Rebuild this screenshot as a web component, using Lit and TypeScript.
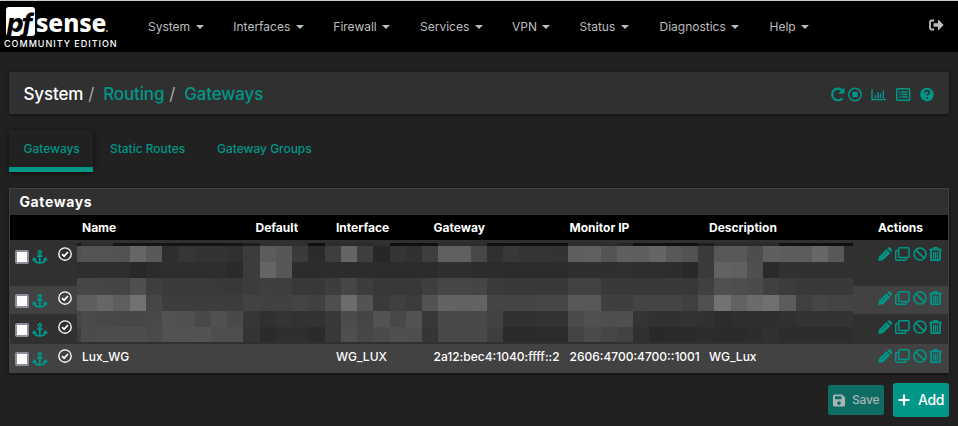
import { LitElement, html, css, svg } from "lit";
import { customElement } from "lit/decorators.js";

const MENU = ["System", "Interfaces", "Firewall", "Services", "VPN", "Status", "Diagnostics", "Help"];

// Grey levels (hex pairs) of the redaction blocks, grouped one + tens per band.
const MOSAIC: { y: number; h: number; v: string }[] = [
  { y: 3, h: 3, v: "18 2d2d1414141414141414 1b303030102b2b2b2f0f 100f2c2c2c1010101010 2d2d2d25101010101c2a 2a2a2a1010101010" },
  { y: 6, h: 16, v: "50 54545266592e36333330 3c5c573b2b3e653e2734 313e6060483038343433 5f60545f5f6558523b58 584d5f5d5c675830" },
  { y: 22, h: 16, v: "2e 2e2f2e282c2e2e2e2e2a 3c65572c2c2c2c2c2c2c 2c2c2f2f2c2c2c2c2c2c 2f2f2f302e2e2d293a62 604f2a3131313130" },
  { y: 38, h: 17, v: "46 4645444f3f3a3a3a3938 3c3f3e38383d463d3838 383f4646453b38383838 42423939393939384050 4e4b403c39393939" },
  { y: 55, h: 16, v: "5c 5f665e72463d3d3d3d3d 42414144404e6c533a40 3c536362634544444647 58583f3f444544405072 626b705c40464443" },
  { y: 71, h: 16, v: "46 4a484747495250495049 3630343232384b455248 5238484848423031 3232 4a504e4f34313133312c 2e2e2e3033333333" },
  { y: 87, h: 15, v: "3e 4b4d4d4d4a5252534e4e 342b2f2f2b384f474b4f 4e354848493e2a2a2c2c 444b464230292b2b2d2b 2b2d312d2d2d2d2d" },
];

const mosaic = () => svg`${MOSAIC.map((band) => {
  const cells = band.v.replace(/ /g, "").match(/../g) ?? [];
  return cells.map((g, i) => {
    const x = i === 0 ? 0 : Math.round(4 + (i - 1) * 16.24);
    const end = Math.min(776, Math.round(4 + i * 16.24));
    return svg`<rect x=${x} y=${band.y} width=${Math.max(0, end - x)} height=${band.h} fill=${"#" + g + g + g}></rect>`;
  });
})}`;

const anchor = html`<svg class="anchor" width="16" height="14" viewBox="0 0 16 14" fill="none" stroke="currentColor">
  <circle cx="7.800" cy="2.300" r="1.600" stroke-width="1.500"/><path d="M7.800 4V13M5 6.200h5.600" stroke-width="1.700"/>
  <path d="M1.900 8.700C2.300 11.600 4.700 12.900 7.800 12.900s5.500-1.300 5.900-4.200" stroke-width="1.900"/>
  <path d="M.5 10.600 1.900 8l2.500 2M15.200 10.600 13.700 8l-2.500 2" stroke-width="1.200"/></svg>`;
const check = html`<svg class="check" width="14" height="14" viewBox="0 0 14 14" fill="none" stroke="currentColor">
  <circle cx="7" cy="7" r="6.200" stroke-width="1.350"/><path d="m4 7.200 2.100 2L10 5" stroke-width="1.700"/></svg>`;
const pencil = html`<svg width="14.500" height="14" viewBox="0 0 14.500 14" fill="currentColor">
  <path d="M.2 14 1.100 9.400 8.400 2.200l3.900 3.900L5 13.200zM9.300 1.400l.9-.8q1-.9 1.900 0l1.700 1.700q.9.900 0 1.900l-.9.900z"/>
  <path d="M3.600 10.300 9.100 4.900" stroke="#303030" stroke-width=".6"/></svg>`;
const clone = html`<svg width="15" height="14" viewBox="0 0 15 14" fill="none" stroke="currentColor" stroke-width="1.500">
  <rect x="3.700" y=".75" width="10.300" height="9.800" rx="1"/><path d="M3.700 3.500H1.750q-1 0-1 1v7.750q0 1 1 1h8.300q1 0 1-1v-1.800"/></svg>`;
const ban = html`<svg width="14" height="14" viewBox="0 0 14 14" fill="none" stroke="currentColor" stroke-width="1.700">
  <circle cx="7" cy="7" r="6"/><path d="m2.800 2.800 8.400 8.400"/></svg>`;
const trash = html`<svg width="13" height="14" viewBox="0 0 13 14" fill="none" stroke="currentColor">
  <path d="M.3 2.500h12.400" stroke-width="1.700"/><path d="M4.200 2.200 5 .8h3l.8 1.400" stroke-width="1.400"/>
  <path d="M2 3v9.200q0 1 1 1h7q1 0 1-1V3" stroke-width="1.800"/><path d="M4.600 4.800v7M6.500 4.800v7M8.400 4.800v7" stroke-width="1.200"/></svg>`;

@customElement("app-root")
export class AppRoot extends LitElement {
  static styles = css`
    :host { display: block; width: 958px; height: 426px; overflow: hidden; background: #212121; color: #fff;
      font: 500 12px/16px Inter, "Liberation Sans", sans-serif; }
    * { box-sizing: border-box; }
    svg { display: block; flex: none; }
    .nav { height: 52px; border-top: 1px solid #c9cbca; background: #000; display: flex; }
    .brand { width: 148px; padding: 6px 0 0 4px; }
    .logo { display: flex; height: 29px; padding-left: 2px; }
    .mark { width: 29px; height: 29px; background: #fff; border-radius: 3px; color: #000;
      font: italic 800 26px/32px Inter, sans-serif; letter-spacing: -1.800px; padding-left: 1px; }
    .sense { width: 71px; font: 800 24.500px/32px "Noto Sans", sans-serif; letter-spacing: -.1px; padding-left: 1px; }
    .reg { width: 2px; height: 2px; background: #777; margin-top: 23px; }
    .edition { font-size: 9px; line-height: 12px; letter-spacing: .98px; font-weight: 500; margin-top: 2px; white-space: nowrap; }
    .menu { display: grid; grid-template-columns: 85.300px 100px 86.700px 92px 67.500px 80px 110px 60px; align-items: center; }
    .item { display: flex; align-items: center; gap: 5.500px; color: #bdbdbd; font-size: 12px; font-weight: 400; letter-spacing: 0; }
    .caret { border: 4px solid transparent; border-top-color: #bdbdbd; border-bottom: 0; }
    .exit { margin: 18px 14px 0 auto; color: #bdbdbd; }
    .crumbs { margin: 20px 9px 0; height: 42px; background: #303030; display: flex; align-items: center; padding: 1px 14px 0 14.500px;
      font: 500 17px/24px Inter, sans-serif; letter-spacing: -.15px; color: #009688; box-shadow: 0 1px 4px #0008; }
    .here { color: #fff; }
    .slash { color: #aaa; font-weight: 400; margin: 0 9px 0 5px; }
    .tools { margin: 2px .5px 0 auto; }
    .tabs { display: flex; margin: 16px 9px 0; color: #009688; line-height: 37px; height: 42px; }
    .tab { padding: 0 14px; margin-right: 4px; letter-spacing: -.03px; }
    .on { border-bottom: 5px solid #009688; width: 84px; margin-right: 3px; padding-left: 14.500px; box-shadow: 0 1px 6px #0009; }
    .panel { margin: 16px 9px 0; height: 185px; border: 1px solid #424242; background: #303030; position: relative; box-shadow: 0 1px 4px #0008; }
    .title { height: 26px; padding-left: 9.500px; font: 700 14px/26px Inter, sans-serif; letter-spacing: .6px; }
    .row { display: grid; grid-template-columns: 22px 26px 24px 173.500px 80.500px 97.500px 136px 139.500px 169px 1fr; white-space: nowrap; }
    .head { height: 25px; line-height: 25px; background: #000; font-weight: 700; }
    .r0 { height: 46px; --top: 7px; } .r1 { height: 28px; --top: 5px; } .r2 { height: 30px; --top: 6px; } .r3 { height: 28px; --top: 5px; }
    .r1, .r3 { background: #424242; }
    .cell { padding-top: 5px; }
    .box { width: 14px; height: 14px; margin: calc(var(--top) + 3px) 0 0 5px; background: #fff; border: 2px solid #8e8b9d; border-radius: 2px; }
    .anchor { color: #009688; margin-top: calc(var(--top) + 3px); }
    .check { margin-top: var(--top); }
    .acts { display: flex; gap: 2.800px; color: #009688; padding-top: var(--top); margin-left: -.5px; }
    .hidden { position: absolute; left: 67px; top: 51px; }
    .foot { display: flex; justify-content: flex-end; align-items: center; gap: 9px; margin: 10px 9px 0; height: 34px; }
    .save { width: 56px; height: 30px; border-radius: 2px; background: #0e6c63; color: #a9b5b3; display: flex; align-items: center; padding-left: 5px; gap: 7px; letter-spacing: -.15px; }
    .add { width: 56px; height: 34px; border-radius: 3px; background: #009688; display: flex; align-items: center; padding-left: 5px; gap: 8px; font-size: 14px; letter-spacing: -.4px; }
  `;

  row(i: number, c: string[]) {
    return html`<div class="row r${i}">
      <span class="box"></span>${anchor}${check}
      ${c.map((t) => html`<span class="cell">${t}</span>`)}
      <div class="acts">${pencil}${clone}${ban}${trash}</div>
    </div>`;
  }

  render() {
    const blank = ["", "", "", "", "", ""];
    return html`
      <nav class="nav">
        <div class="brand">
          <div class="logo"><span class="mark">pf</span><span class="sense">sense</span><span class="reg"></span></div>
          <div class="edition">COMMUNITY EDITION</div>
        </div>
        <div class="menu">${MENU.map((m) => html`<div class="item">${m}<span class="caret"></span></div>`)}</div>
        <svg class="exit" width="15" height="13" viewBox="0 0 15 13"><path d="M5 1.500H2.500q-1.500 0-1.500 1.500v6q0 1.500 1.500 1.500H5" fill="none" stroke="currentColor" stroke-width="1.800"/><path d="M4.500 4.200H9V1.300q0-.8.7-.3l4.500 4.500q.5.500 0 1L9.700 11q-.7.500-.7-.3V7.800H4.500z" fill="currentColor"/></svg>
      </nav>
      <div class="crumbs">
        <span class="here">System</span><span class="slash">/</span><span>Routing</span><span class="slash">/</span><span>Gateways</span>
        <div class="tools">
          <svg width="105" height="15" viewBox="0 0 105 15" fill="none" stroke="currentColor">
            <path d="M12 3.300A5.800 5.800 0 1 0 12.400 11.200" stroke-width="2.200"/><path d="M14.400.4v6.200H8.200z" fill="currentColor" stroke="none"/>
            <circle cx="25" cy="7.500" r="6.200" stroke-width="1.500"/><rect x="22.300" y="4.800" width="5.400" height="5.400" fill="currentColor" stroke="none"/>
            <path d="M42 2v10.500h14" stroke-width="1.400"/><path d="M45.500 8v3M48 5v6M50.500 6.500V11M53.300 3.500V11" stroke-width="1.400"/>
            <rect x="66.700" y="1.700" width="12.900" height="11.500" rx=".8" stroke-width="1.500"/><path d="M68.700 5h1.600M71.300 5h6.300M68.700 7.500h1.600M71.300 7.500h6.300M68.700 10h1.600M71.300 10h6.300" stroke-width="1.400"/>
            <circle cx="97" cy="7.500" r="6.800" fill="currentColor" stroke="none"/><path d="M94.700 5.700q.2-2 2.300-2 2.300 0 2.300 1.800 0 1-1.100 1.600-1 .6-1 1.500M97.100 10v1.800" stroke="#303030" stroke-width="1.700"/>
          </svg>
        </div>
      </div>
      <div class="tabs"><span class="tab on">Gateways</span><span class="tab">Static Routes</span><span class="tab">Gateway Groups</span></div>
      <section class="panel">
        <div class="title">Gateways</div>
        <div class="row head"><span></span><span></span><span></span><span>Name</span><span>Default</span><span>Interface</span><span>Gateway</span><span>Monitor IP</span><span>Description</span><span>Actions</span></div>
        ${this.row(0, blank)}${this.row(1, blank)}${this.row(2, blank)}
        ${this.row(3, ["Lux_WG", "", "WG_LUX", "2a12:bec4:1040:ffff::2", "2606:4700:4700::1001", "WG_Lux"])}
        <svg class="hidden" width="776" height="102" shape-rendering="crispEdges">${mosaic()}</svg>
      </section>
      <div class="foot">
        <div class="save"><svg width="12" height="13" viewBox="0 0 12 13"><path fill="currentColor" fill-rule="evenodd" d="M1.500.5H9l3 3V11q0 1.500-1.500 1.500h-9Q0 12.500 0 11V2Q0 .5 1.500.5zM2 2.300v3h6.500v-3zM6 7.200a1.900 1.900 0 1 0 .01 0z"/></svg>Save</div>
        <div class="add"><svg width="12" height="12" viewBox="0 0 12 12"><path d="M6 .5v11M.5 6h11" stroke="currentColor" stroke-width="2.200"/></svg>Add</div>
      </div>`;
  }
}
